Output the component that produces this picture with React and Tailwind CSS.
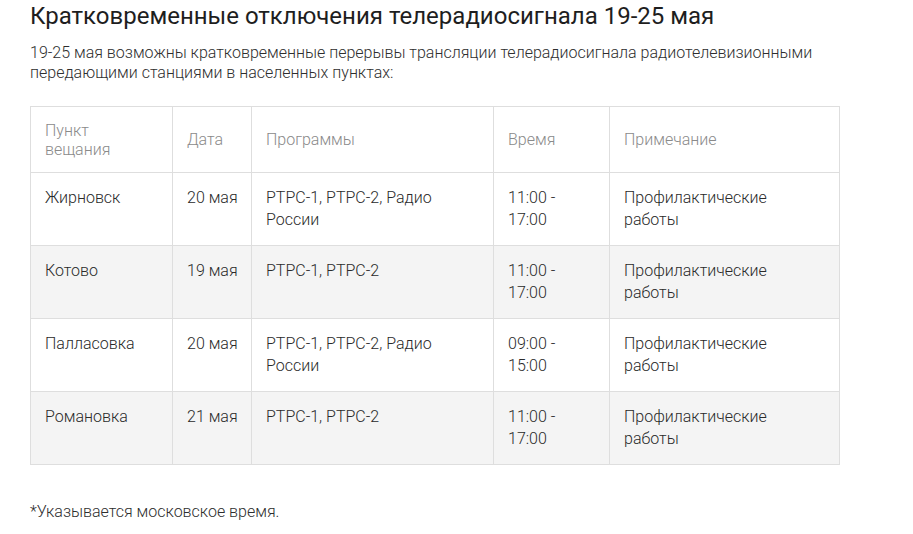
import React from "react";

const rows = [
  ["Жирновск", "20 мая", "РТРС-1, РТРС-2, Радио России", "11:00 - 17:00", "Профилактические работы"],
  ["Котово", "19 мая", "РТРС-1, РТРС-2", "11:00 - 17:00", "Профилактические работы"],
  ["Палласовка", "20 мая", "РТРС-1, РТРС-2, Радио России", "09:00 - 15:00", "Профилактические работы"],
  ["Романовка", "21 мая", "РТРС-1, РТРС-2", "11:00 - 17:00", "Профилактические работы"],
];

const widths = ["w-[142px]", "w-[79px]", "w-[242px]", "w-[116px]", "w-[230px]"];

function App() {
  return (
    <div className="min-h-screen bg-white px-[30px] font-['Roboto',sans-serif]">
      <h1 className="text-[24px] leading-[32px] font-normal text-[#1e1e1e]">
        Кратковременные отключения телерадиосигнала 19-25 мая
      </h1>
      <p className="mt-[11px] text-[16px] leading-[20px] font-light text-[#2e2e2e]">
        19-25 мая возможны кратковременные перерывы трансляции телерадиосигнала радиотелевизионными передающими станциями в населенных пунктах:
      </p>
      <table className="mt-[23px] w-[809px] table-fixed border-collapse border border-[#dedede] font-light text-[16px]">
        <thead>
          <tr>
            {[["Пункт", "вещания"], ["Дата"], ["Программы"], ["Время"], ["Примечание"]].map((h, i) => (
              <th
                key={h[0]}
                className={`${widths[i]} h-[66px] border border-[#dedede] px-[14px] py-[13px] text-left align-middle font-light leading-[19px] text-[#8a8a8a]`}
              >
                {h[0]}
                {h[1] && <br />}
                {h[1]}
              </th>
            ))}
          </tr>
        </thead>
        <tbody>
          {rows.map((r, ri) => (
            <tr key={r[0]} className={ri % 2 === 1 ? "bg-[#f4f4f4]" : "bg-white"}>
              {r.map((c, ci) => (
                <td
                  key={ci}
                  className={`h-[73px] border border-[#dedede] px-[14px] py-[14px] align-top leading-[22px] text-[#2a2a2a] ${ci === 1 ? "whitespace-nowrap" : ""}`}
                >
                  {c}
                </td>
              ))}
            </tr>
          ))}
        </tbody>
      </table>
      <p className="mt-[37px] text-[16px] leading-[20px] font-light text-[#2e2e2e]">
        *Указывается московское время.
      </p>
    </div>
  );
}

export default App;
